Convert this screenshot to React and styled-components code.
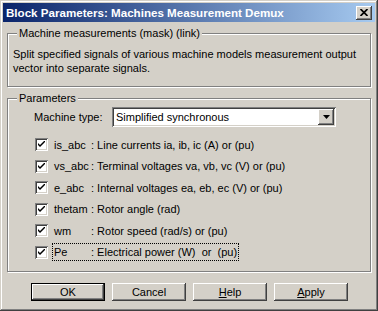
import styled, { createGlobalStyle } from "styled-components"

const GlobalStyle = createGlobalStyle`
  html, body {
    margin: 0;
    padding: 0;
    background: #d4d0c8;
  }
  body {
    font-family: "Liberation Sans", Arial, sans-serif;
    font-size: 11px;
    color: #000;
  }
`

const raised = `
  box-shadow: inset -1px -1px #404040, inset 1px 1px #fff,
    inset -2px -2px #808080, inset 2px 2px #d4d0c8;
`

const sunken = `
  box-shadow: inset 1px 1px #808080, inset -1px -1px #fff,
    inset 2px 2px #404040, inset -2px -2px #d4d0c8;
`

const Window = styled.div`
  width: 378px;
  height: 311px;
  box-sizing: border-box;
  padding: 3px;
  background: #d4d0c8;
  box-shadow: inset -1px -1px #404040, inset 1px 1px #d4d0c8,
    inset -2px -2px #808080, inset 2px 2px #fff;
  display: flex;
  flex-direction: column;
`

const TitleBar = styled.div`
  height: 19px;
  flex: none;
  display: flex;
  align-items: center;
  justify-content: space-between;
  padding: 0 3px 0 3px;
  background: linear-gradient(to right, #0a246a, #a6caf0);
  color: #fff;
  font-weight: bold;
  font-size: 11.6px;
`

const CloseBtn = styled.div`
  width: 16px;
  height: 14px;
  background: #d4d0c8;
  ${raised}
  display: flex;
  align-items: center;
  justify-content: center;
`

const Body = styled.div`
  flex: 1;
  display: flex;
  flex-direction: column;
  padding: 11px 4px 0 4px;
`

const Group = styled.div`
  position: relative;
  border: 1px solid #808080;
  box-shadow: inset 1px 1px #fff, 1px 1px #fff;
  height: ${p => p.$h}px;
  box-sizing: border-box;
  margin-top: ${p => p.$mt || 0}px;
`

const Legend = styled.span`
  position: absolute;
  top: -8px;
  left: 9px;
  padding: 0 2px;
  background: #d4d0c8;
  line-height: 14px;
`

const Desc = styled.div`
  padding: 13px 0 0 5px;
  line-height: 14px;
`

const Params = styled.div`
  display: flex;
  flex-direction: column;
  padding: 8px 0 0 26px;
`

const TypeRow = styled.div`
  display: flex;
  align-items: center;
  height: 20px;
  margin-bottom: 7px;
`

const TypeLabel = styled.span`
  width: 78px;
`

const Select = styled.div`
  width: 224px;
  height: 20px;
  box-sizing: border-box;
  background: #fff;
  ${sunken}
  display: flex;
  align-items: center;
  justify-content: space-between;
  padding: 2px 2px 2px 4px;
`

const ArrowBtn = styled.div`
  width: 16px;
  height: 16px;
  background: #d4d0c8;
  ${raised}
  display: flex;
  align-items: center;
  justify-content: center;
`

const CheckRow = styled.div`
  display: flex;
  align-items: center;
  height: 21.5px;
  padding-left: 1px;
`

const Box = styled.div`
  width: 13px;
  height: 13px;
  flex: none;
  box-sizing: border-box;
  background: #fff;
  ${sunken}
  display: flex;
  align-items: center;
  justify-content: center;
  margin-right: 4px;
`

const LabelText = styled.span`
  display: flex;
  padding: 1px 1px;
  border: 1px dotted ${p => (p.$focus ? "#000" : "transparent")};
  line-height: 14px;
`

const Sig = styled.span`
  width: 37px;
`

const Buttons = styled.div`
  display: flex;
  gap: 7px;
  margin-top: 11px;
  padding-left: 24px;
`

const Button = styled.div`
  width: 74px;
  height: 18px;
  box-sizing: border-box;
  background: #d4d0c8;
  display: flex;
  align-items: center;
  justify-content: center;
  ${p =>
    p.$default
      ? `box-shadow: inset 0 0 0 1px #000, inset -2px -2px #404040, inset 2px 2px #fff, inset -3px -3px #808080;`
      : raised}
  u {
    text-decoration: underline;
  }
`

const signals = [
  ["is_abc", ": Line currents ia, ib, ic (A) or (pu)"],
  ["vs_abc", ": Terminal voltages va, vb, vc (V) or (pu)"],
  ["e_abc", ": Internal voltages ea, eb, ec (V) or (pu)"],
  ["thetam", ": Rotor angle (rad)"],
  ["wm", ": Rotor speed (rad/s) or (pu)"],
  ["Pe", ": Electrical power (W)\u00a0 or\u00a0 (pu)"],
]

function Check() {
  return (
    <svg width="7" height="7" viewBox="0 0 7 7">
      <path d="M0 2 L0 4 L2 6 L7 1 L7 -1 L2 4 Z" fill="#000" />
    </svg>
  )
}

export default function App() {
  return (
    <>
      <GlobalStyle />
      <Window>
        <TitleBar>
          <span>Block Parameters: Machines Measurement Demux</span>
          <CloseBtn>
            <svg width="8" height="7" viewBox="0 0 8 7">
              <path d="M0.5 0 L7.5 7 M7.5 0 L0.5 7" stroke="#000" strokeWidth="1.7" />
            </svg>
          </CloseBtn>
        </TitleBar>
        <Body>
          <Group $h={54}>
            <Legend>Machine measurements (mask) (link)</Legend>
            <Desc>
              Split specified signals of various machine models measurement output
              <br />
              vector into separate signals.
            </Desc>
          </Group>
          <Group $h={174} $mt={11}>
            <Legend>Parameters</Legend>
            <Params>
              <TypeRow>
                <TypeLabel>Machine type:</TypeLabel>
                <Select>
                  <span>Simplified synchronous</span>
                  <ArrowBtn>
                    <svg width="7" height="4" viewBox="0 0 7 4">
                      <path d="M0 0 L7 0 L3.5 4 Z" fill="#000" />
                    </svg>
                  </ArrowBtn>
                </Select>
              </TypeRow>
              {signals.map(([name, text], i) => (
                <CheckRow key={name}>
                  <Box>
                    <Check />
                  </Box>
                  <LabelText $focus={i === signals.length - 1}>
                    <Sig>{name}</Sig>
                    <span>{text}</span>
                  </LabelText>
                </CheckRow>
              ))}
            </Params>
          </Group>
          <Buttons>
            <Button $default>OK</Button>
            <Button>Cancel</Button>
            <Button>
              <span><u>H</u>elp</span>
            </Button>
            <Button>
              <span><u>A</u>pply</span>
            </Button>
          </Buttons>
        </Body>
      </Window>
    </>
  )
}
